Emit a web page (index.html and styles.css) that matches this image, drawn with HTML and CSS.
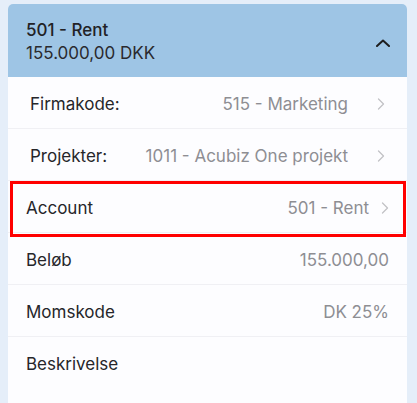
FILE: index.html
```html
<!DOCTYPE html>
<html>
<head>
<meta charset="utf-8">
<link rel="stylesheet" href="styles.css">
</head>
<body>
<div class="card">
  <div class="card-head">
    <div class="head-text">
      <div class="head-title">501 - Rent</div>
      <div class="head-sub">155.000,00 DKK</div>
    </div>
    <svg class="chev-up" width="14" height="8" viewBox="0 0 14 8"><path d="M1 7 L7 1.5 L13 7" fill="none" stroke="#1e1e1e" stroke-width="2" stroke-linecap="round" stroke-linejoin="round"/></svg>
  </div>
  <div class="row row-dim">
    <span class="label">Firmakode:</span>
    <span class="value">515 - Marketing</span>
    <svg class="chev" width="8" height="12" viewBox="0 0 8 12"><path d="M1.5 1 L6.5 6 L1.5 11" fill="none" stroke="#c2c2c6" stroke-width="1.3" stroke-linecap="round" stroke-linejoin="round"/></svg>
  </div>
  <div class="row row-dim">
    <span class="label">Projekter:</span>
    <span class="value">1011 - Acubiz One projekt</span>
    <svg class="chev" width="8" height="12" viewBox="0 0 8 12"><path d="M1.5 1 L6.5 6 L1.5 11" fill="none" stroke="#c2c2c6" stroke-width="1.3" stroke-linecap="round" stroke-linejoin="round"/></svg>
  </div>
  <div class="row row-main highlight">
    <span class="label">Account</span>
    <span class="value">501 - Rent</span>
    <svg class="chev chev-near" width="8" height="12" viewBox="0 0 8 12"><path d="M1.5 1 L6.5 6 L1.5 11" fill="none" stroke="#c2c2c6" stroke-width="1.3" stroke-linecap="round" stroke-linejoin="round"/></svg>
  </div>
  <div class="row row-main">
    <span class="label">Beløb</span>
    <span class="value">155.000,00</span>
  </div>
  <div class="row row-main">
    <span class="label">Momskode</span>
    <span class="value">DK 25%</span>
  </div>
  <div class="row row-main no-line">
    <span class="label">Beskrivelse</span>
  </div>
</div>
</body>
</html>
```

FILE: styles.css
```css
* { box-sizing: border-box; }
html, body { margin: 0; height: 100%; }
body {
  background: #e5eef9;
  padding: 4px 10px 0 8px;
  font-family: Inter, "Noto Sans", sans-serif;
  color: #222226;
  overflow: hidden;
  display: flex;
  flex-direction: column;
}
.card {
  flex: 1;
  background: #fdfdff;
  border-radius: 5px 5px 0 0;
}
.card-head {
  background: #9ec5e5;
  border-radius: 5px 5px 0 0;
  height: 73px;
  display: flex;
  align-items: center;
  padding: 2px 17px 0 18px;
}
.head-text { flex: 1; display: flex; flex-direction: column; gap: 1px; }
.head-title { font-size: 17px; font-weight: 500; line-height: 22px; }
.head-sub { font-size: 17px; line-height: 22px; color: #2a2a2e; }
.chev-up { margin-top: 3px; }
.row {
  height: 52px;
  display: flex;
  align-items: center;
  font-size: 17px;
  padding-top: 2px;
  border-bottom: 1px solid #f0f0f4;
  color: #26262a;
}
.row.no-line { border-bottom: none; }
.row-dim { padding-left: 22px; padding-right: 22px; }
.row-main { padding-left: 18px; padding-right: 18px; }
.label { flex: 1; }
.value { color: #8e8e93; }
.chev { margin-left: 29px; }
.chev-near { margin-left: 12px; }
.highlight { position: relative; }
.highlight::after {
  content: "";
  position: absolute;
  left: 2px;
  right: 1px;
  top: 0;
  bottom: -5px;
  border: 3px solid #ff0000;
}
```
